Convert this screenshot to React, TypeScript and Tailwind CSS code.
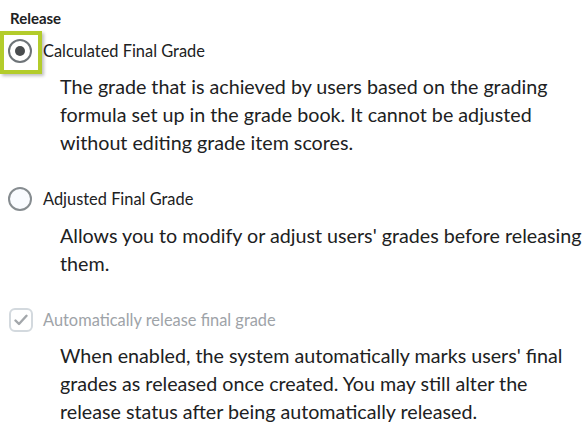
import React from "react";

const FONT = "font-['Lato','Noto_Sans',sans-serif]";

function Desc({ lines }: { lines: string[] }) {
  return (
    <p className="ml-[60px] text-[19.7px] leading-[28px] text-[#202122] whitespace-nowrap">
      {lines.map((l, i) => (
        <span key={i} className="block">{l}</span>
      ))}
    </p>
  );
}

export default function App() {
  return (
    <div className={`${FONT} w-[583px] h-[437px] bg-white overflow-hidden pt-[8px]`}>
      <div className="ml-[10px] text-[15px] leading-[20px] font-bold text-[#202122]">Release</div>

      {/* selected radio, highlighted */}
      <div className="relative mt-[11px] flex items-center h-[24px]">
        <div className="absolute left-0 top-[-8px] w-[42px] h-[43px] border-[4px] border-[#b3cc2b] shadow-[2px_2px_3px_rgba(0,0,0,0.25)]" />
        <span className="ml-[8px] w-[24px] h-[24px] rounded-full border-2 border-[#6e7478] bg-white flex items-center justify-center shrink-0">
          <span className="w-[10px] h-[10px] rounded-full bg-[#494c4e]" />
        </span>
        <span className="ml-[11px] text-[16.4px] text-[#202122]">Calculated Final Grade</span>
      </div>
      <div className="mt-[10px]">
        <Desc
          lines={[
            "The grade that is achieved by users based on the grading",
            "formula set up in the grade book. It cannot be adjusted",
            "without editing grade item scores.",
          ]}
        />
      </div>

      <div className="mt-[30px] flex items-center h-[24px]">
        <span className="ml-[8px] w-[24px] h-[24px] rounded-full border-2 border-[#868c90] bg-[#f9fbff] shrink-0" />
        <span className="ml-[11px] text-[16.4px] text-[#202122]">Adjusted Final Grade</span>
      </div>
      <div className="mt-[11px]">
        <Desc lines={["Allows you to modify or adjust users' grades before releasing", "them."]} />
      </div>

      <div className="mt-[30px] flex items-center h-[24px]">
        <span className="ml-[9px] w-[24px] h-[24px] rounded-[6px] border-2 border-[#d3d9de] bg-white flex items-center justify-center shrink-0">
          <svg width="14" height="12" viewBox="0 0 14 12" fill="none">
            <path d="M1.5 6.5 L5 10 L12.5 1.8" stroke="#a3a7ab" strokeWidth="2.4" strokeLinecap="round" strokeLinejoin="round" />
          </svg>
        </span>
        <span className="ml-[10px] text-[16.4px] text-[#9ea3a8]">Automatically release final grade</span>
      </div>
      <div className="mt-[10px]">
        <Desc
          lines={[
            "When enabled, the system automatically marks users' final",
            "grades as released once created. You may still alter the",
            "release status after being automatically released.",
          ]}
        />
      </div>
    </div>
  );
}
